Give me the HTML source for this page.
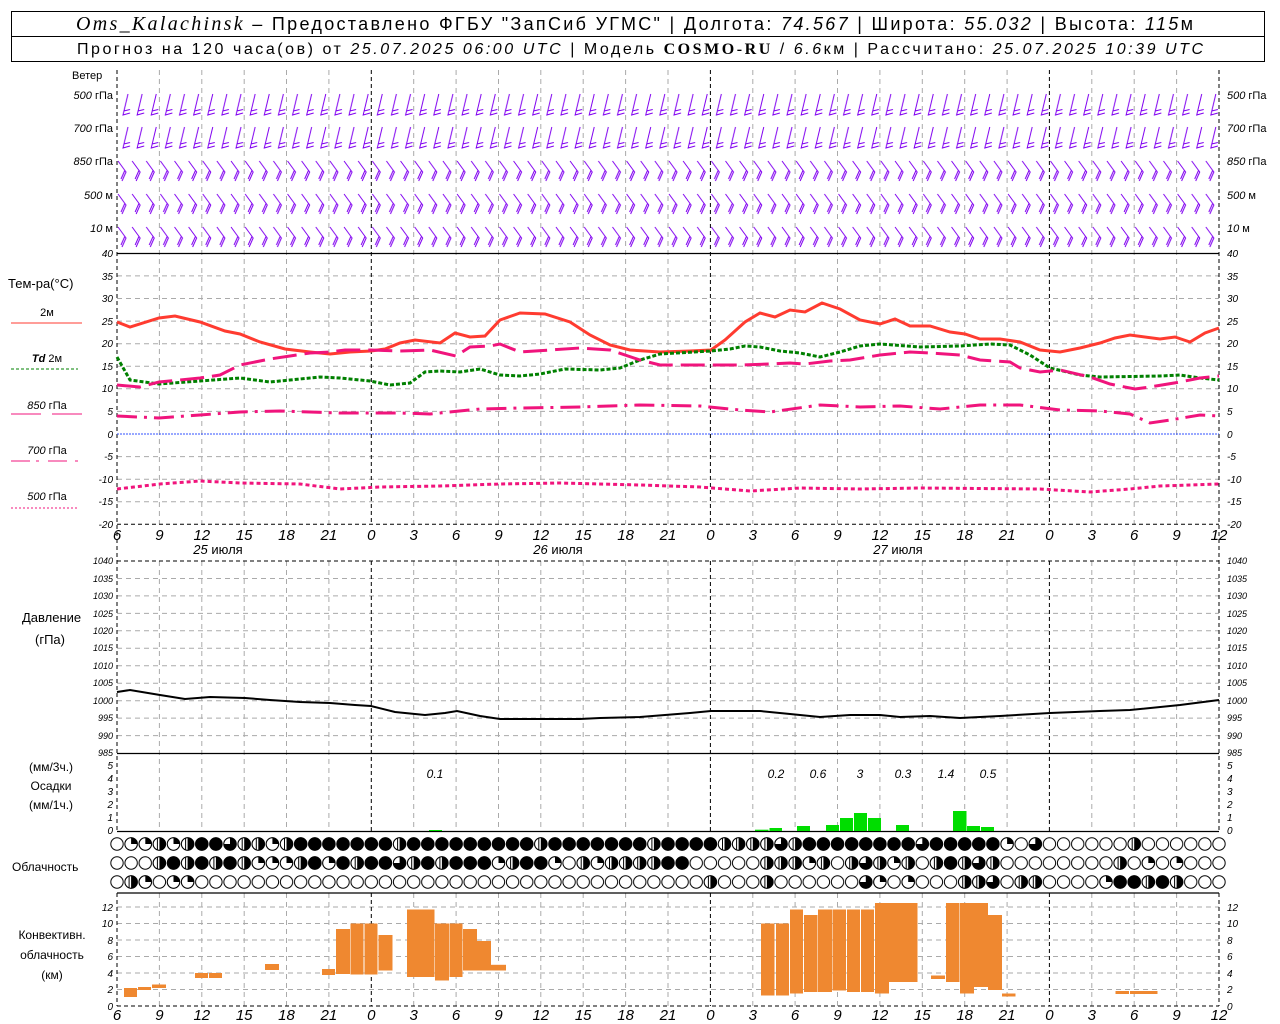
<!DOCTYPE html>
<html><head><meta charset="utf-8"><style>
html,body{margin:0;padding:0;background:#fff;width:1280px;height:1024px;overflow:hidden}
svg{display:block}
.t{font-family:"Liberation Sans",sans-serif;font-size:12px;fill:#000}
.ti{font-family:"Liberation Sans",sans-serif;font-size:10px;font-style:italic;fill:#000}
.tx{font-family:"Liberation Sans",sans-serif;font-size:15px;font-style:italic;fill:#000}
.g{stroke:#aaa;stroke-width:1;stroke-dasharray:5 4;fill:none}
.k{stroke:#000;stroke-width:1;stroke-dasharray:4 3;fill:none}
</style></head><body>
<svg width="1280" height="1024" viewBox="0 0 1280 1024" xmlns="http://www.w3.org/2000/svg">
<defs>
<pattern id="pe" x="109.94" y="834.5" width="14.128" height="19" patternUnits="userSpaceOnUse"><circle cx="7.064" cy="9.5" r="6.2" fill="#fff" stroke="#000" stroke-width="1"/></pattern>
<g id="f"><circle r="6.2" fill="#000" stroke="#000"/></g>
<g id="h"><circle r="6.2" fill="#fff" stroke="#000"/><path d="M0,-6.2A6.2,6.2 0 0 1 0,6.2Z" fill="#000"/><path d="M-2,-6V6" stroke="#000"/></g>
<g id="q"><circle r="6.2" fill="#fff" stroke="#000"/><path d="M0,0V-6.2A6.2,6.2 0 0 1 6.2,0Z" fill="#000"/></g>
<g id="t"><circle r="6.2" fill="#fff" stroke="#000"/><path d="M0,0V-6.2A6.2,6.2 0 1 1 -6.2,0Z" fill="#000"/></g>
<pattern id="wa" x="117" y="93" width="14.128" height="33" patternUnits="userSpaceOnUse"><path d="M11,1 L6,22 L13,20 M6.8,18 L13,16.5" stroke="#8000f0" stroke-width="1" fill="none"/></pattern>
<pattern id="wb" x="117" y="160" width="14.128" height="33" patternUnits="userSpaceOnUse"><path d="M1,1 L9,12 L5,21 M8,10 L4,19" stroke="#8000f0" stroke-width="1" fill="none"/></pattern>
</defs>

<!-- header -->
<rect x="11.5" y="11.5" width="1253" height="50" fill="none" stroke="#000"/>
<line x1="11" y1="36.5" x2="1265" y2="36.5" stroke="#000"/>
<text x="76" y="30" textLength="1117" lengthAdjust="spacing" style="font-family:'Liberation Sans',sans-serif;font-size:18px"><tspan style="font-family:'Liberation Serif',serif;font-style:italic;font-size:20px">Oms_Kalachinsk</tspan> – Предоставлено ФГБУ "ЗапСиб УГМС" | Долгота: <tspan font-style="italic">74.567</tspan> | Широта: <tspan font-style="italic">55.032</tspan> | Высота: <tspan font-style="italic">115</tspan>м</text>
<text x="77" y="54" textLength="1126" lengthAdjust="spacing" style="font-family:'Liberation Sans',sans-serif;font-size:16px">Прогноз на 120 часа(ов) от <tspan font-style="italic">25.07.2025 06:00 UTC</tspan> | Модель <tspan style="font-family:'Liberation Serif',serif;font-weight:bold">COSMO-RU</tspan> / <tspan font-style="italic">6.6</tspan>км | Рассчитано: <tspan font-style="italic">25.07.2025 10:39 UTC</tspan></text>

<!-- vertical grid -->
<path class="g" d="M159.4 70V524M159.4 561V831M159.4 893V1006M201.8 70V524M201.8 561V831M201.8 893V1006M244.2 70V524M244.2 561V831M244.2 893V1006M286.5 70V524M286.5 561V831M286.5 893V1006M328.9 70V524M328.9 561V831M328.9 893V1006M413.7 70V524M413.7 561V831M413.7 893V1006M456.1 70V524M456.1 561V831M456.1 893V1006M498.5 70V524M498.5 561V831M498.5 893V1006M540.8 70V524M540.8 561V831M540.8 893V1006M583.2 70V524M583.2 561V831M583.2 893V1006M625.6 70V524M625.6 561V831M625.6 893V1006M668 70V524M668 561V831M668 893V1006M752.8 70V524M752.8 561V831M752.8 893V1006M795.1 70V524M795.1 561V831M795.1 893V1006M837.5 70V524M837.5 561V831M837.5 893V1006M879.9 70V524M879.9 561V831M879.9 893V1006M922.3 70V524M922.3 561V831M922.3 893V1006M964.7 70V524M964.7 561V831M964.7 893V1006M1007.1 70V524M1007.1 561V831M1007.1 893V1006M1091.8 70V524M1091.8 561V831M1091.8 893V1006M1134.2 70V524M1134.2 561V831M1134.2 893V1006M1176.6 70V524M1176.6 561V831M1176.6 893V1006"/>
<!-- horizontal grid -->
<path class="g" d="M117 275.9H1219M117 298.5H1219M117 321.1H1219M117 343.7H1219M117 366.2H1219M117 388.8H1219M117 411.4H1219M117 456.6H1219M117 479.2H1219M117 501.8H1219M117 578.5H1219M117 595.9H1219M117 613.4H1219M117 630.8H1219M117 648.3H1219M117 665.8H1219M117 683.2H1219M117 700.7H1219M117 718.1H1219M117 735.6H1219M117 989.5H1219M117 973H1219M117 956.5H1219M117 940H1219M117 923.5H1219M117 907H1219"/>
<!-- black dashed -->
<path class="k" d="M117 70V831M117 893V1006M1219 70V831M1219 893V1006M371.3 70V524M371.3 561V831M371.3 893V1006M710.4 70V524M710.4 561V831M710.4 893V1006M1049.4 70V524M1049.4 561V831M1049.4 893V1006M117 524.3H1219M117 561H1219M117 1006H1219"/>
<path d="M117 253.5H1219M117 753.5H1219M117 831.5H1219M117 893H1219" stroke="#000" stroke-width="1.3"/>
<line x1="117" y1="434" x2="1219" y2="434" stroke="#3050ff" stroke-width="1" stroke-dasharray="2 1"/>

<!-- wind barbs -->
<rect x="117" y="93" width="1102" height="66" fill="url(#wa)"/>
<rect x="117" y="160" width="1102" height="92" fill="url(#wb)"/>
<g class="t" style="font-size:11px">
<text x="72" y="79">Ветер</text>
<text x="113" y="99" text-anchor="end"><tspan font-style="italic">500</tspan> гПа</text>
<text x="113" y="132" text-anchor="end"><tspan font-style="italic">700</tspan> гПа</text>
<text x="113" y="165" text-anchor="end"><tspan font-style="italic">850</tspan> гПа</text>
<text x="113" y="199" text-anchor="end"><tspan font-style="italic">500</tspan> м</text>
<text x="113" y="232" text-anchor="end"><tspan font-style="italic">10</tspan>   м</text>
<text x="1227" y="99"><tspan font-style="italic">500</tspan> гПа</text>
<text x="1227" y="132"><tspan font-style="italic">700</tspan> гПа</text>
<text x="1227" y="165"><tspan font-style="italic">850</tspan> гПа</text>
<text x="1227" y="199"><tspan font-style="italic">500</tspan> м</text>
<text x="1227" y="232"><tspan font-style="italic">10</tspan>   м</text>
</g>

<!-- temperature curves -->
<polyline fill="none" stroke="#ff3b30" stroke-width="3" points="117,322 130,327 159,318 175,316 200,322 225,331 240,334 260,342 285,349 310,352 330,354 350,352 371,351 385,349 400,343 415,340 440,343 455,333 470,337 485,336 500,320 520,313 545,314 570,322 590,335 610,345 630,350 660,352 690,351 711,350 725,340 745,322 760,313 775,317 790,310 805,312 822,303 840,309 860,320 880,324 895,319 910,326 930,326 950,332 965,334 980,339 1000,339 1020,342 1040,350 1060,352 1080,348 1100,343 1115,338 1130,335 1160,339 1175,337 1190,342 1205,333 1219,328"/>
<polyline fill="none" stroke="#008000" stroke-width="3" stroke-dasharray="4 2" points="117,357 130,380 159,384 200,381 240,378 270,382 320,377 340,378 370,381 390,385 410,383 425,372 440,371 460,372 480,369 500,375 520,376 540,374 565,369 600,370 620,368 640,360 660,354 711,351 730,349 745,346 760,347 780,351 800,353 820,357 840,352 860,346 880,344 920,347 960,346 990,344 1010,345 1030,355 1050,368 1080,375 1100,377 1160,376 1180,375 1200,378 1219,380"/>
<polyline fill="none" stroke="#f0147c" stroke-width="3" stroke-dasharray="24 8" points="117,385 140,387 159,382 200,378 220,375 240,365 270,359 290,356 310,353 330,352 345,350 370,350 400,351 430,350 456,356 470,347 490,346 500,344 520,352 550,350 580,348 610,350 640,360 660,365 711,365 740,365 770,364 790,363 805,364 830,361 850,360 880,355 910,352 930,353 960,355 980,360 1010,362 1020,368 1040,372 1060,370 1090,377 1110,384 1135,389 1150,387 1180,382 1200,378 1219,376"/>
<polyline fill="none" stroke="#f0147c" stroke-width="3" stroke-dasharray="20 7 3 7" points="117,416 159,418 200,415 240,412 280,411 340,413 400,413 430,414 480,409 520,408 580,407 640,405 700,406 740,410 770,412 820,405 860,407 900,406 940,409 980,405 1020,405 1060,410 1100,411 1130,414 1150,423 1170,420 1200,415 1219,416"/>
<polyline fill="none" stroke="#f0147c" stroke-width="3" stroke-dasharray="4 3" points="117,489 160,484 200,481 240,483 300,484 340,489 380,487 440,486 500,484 560,483 640,485 700,487 750,491 800,488 860,489 920,488 1040,489 1090,492 1130,489 1160,486 1219,484"/>

<!-- temp legend -->
<g class="t">
<text x="8" y="288" style="font-size:13px">Тем-ра(°C)</text>
<text x="47" y="316" text-anchor="middle" style="font-size:11px">2м</text>
<text x="47" y="362" text-anchor="middle" style="font-size:11px"><tspan font-style="italic" font-weight="bold">Td</tspan>  2м</text>
<text x="47" y="409" text-anchor="middle" style="font-size:11px"><tspan font-style="italic">850</tspan> гПа</text>
<text x="47" y="454" text-anchor="middle" style="font-size:11px"><tspan font-style="italic">700</tspan> гПа</text>
<text x="47" y="500" text-anchor="middle" style="font-size:11px"><tspan font-style="italic">500</tspan> гПа</text>
</g>
<line x1="11" y1="323" x2="82" y2="323" stroke="#ff3b30"/>
<line x1="11" y1="369" x2="78" y2="369" stroke="#008000" stroke-dasharray="3 2"/>
<path d="M11 414H41M52 414H82" stroke="#f0147c"/>
<path d="M11 461H30M36 461H39M48 461H67M75 461H78" stroke="#f0147c"/>
<line x1="11" y1="508" x2="78" y2="508" stroke="#f0147c" stroke-dasharray="2 2"/>

<!-- temp ticks -->
<g class="ti" text-anchor="end">
<text x="113" y="257">40</text><text x="113" y="280">35</text><text x="113" y="302">30</text><text x="113" y="325">25</text><text x="113" y="347">20</text><text x="113" y="370">15</text><text x="113" y="392">10</text><text x="113" y="415">5</text><text x="113" y="438">0</text><text x="113" y="460">-5</text><text x="113" y="483">-10</text><text x="113" y="505">-15</text><text x="113" y="528">-20</text>
</g>
<g class="ti">
<text x="1227" y="257">40</text><text x="1227" y="280">35</text><text x="1227" y="302">30</text><text x="1227" y="325">25</text><text x="1227" y="347">20</text><text x="1227" y="370">15</text><text x="1227" y="392">10</text><text x="1227" y="415">5</text><text x="1227" y="438">0</text><text x="1227" y="460">-5</text><text x="1227" y="483">-10</text><text x="1227" y="505">-15</text><text x="1227" y="528">-20</text>
</g>
<g class="tx" text-anchor="middle">
<text x="117" y="540">6</text><text x="159.4" y="540">9</text><text x="201.8" y="540">12</text><text x="244.2" y="540">15</text><text x="286.5" y="540">18</text><text x="328.9" y="540">21</text><text x="371.3" y="540">0</text><text x="413.7" y="540">3</text><text x="456.1" y="540">6</text><text x="498.5" y="540">9</text><text x="540.8" y="540">12</text><text x="583.2" y="540">15</text><text x="625.6" y="540">18</text><text x="668" y="540">21</text><text x="710.4" y="540">0</text><text x="752.8" y="540">3</text><text x="795.1" y="540">6</text><text x="837.5" y="540">9</text><text x="879.9" y="540">12</text><text x="922.3" y="540">15</text><text x="964.7" y="540">18</text><text x="1007.1" y="540">21</text><text x="1049.4" y="540">0</text><text x="1091.8" y="540">3</text><text x="1134.2" y="540">6</text><text x="1176.6" y="540">9</text><text x="1219" y="540">12</text>
</g>
<g class="t" text-anchor="middle" style="font-size:13px">
<text x="218" y="554"><tspan font-style="italic">25</tspan> июля</text>
<text x="558" y="554"><tspan font-style="italic">26</tspan> июля</text>
<text x="898" y="554"><tspan font-style="italic">27</tspan> июля</text>
</g>

<!-- pressure -->
<polyline fill="none" stroke="#000" stroke-width="2" points="117,692 130,690 160,695 185,699 210,697 245,698 270,700 300,702 330,703 355,705 371,706 395,712 425,715 445,713 457,711 480,716 500,719 580,719 600,718 640,717 690,713 711,711 760,711 790,714 820,717 850,715 880,715 900,717 930,716 960,718 1000,716 1050,713 1100,711 1130,710 1180,705 1219,700"/>
<g class="t" style="font-size:13px"><text x="22" y="622">Давление</text><text x="50" y="644" text-anchor="middle">(гПа)</text></g>
<g class="ti" text-anchor="end" style="font-size:9px">
<text x="113" y="564">1040</text><text x="113" y="582">1035</text><text x="113" y="599">1030</text><text x="113" y="617">1025</text><text x="113" y="634">1020</text><text x="113" y="651">1015</text><text x="113" y="669">1010</text><text x="113" y="686">1005</text><text x="113" y="704">1000</text><text x="113" y="721">995</text><text x="113" y="739">990</text><text x="113" y="756">985</text>
</g>
<g class="ti" style="font-size:9px">
<text x="1227" y="564">1040</text><text x="1227" y="582">1035</text><text x="1227" y="599">1030</text><text x="1227" y="617">1025</text><text x="1227" y="634">1020</text><text x="1227" y="651">1015</text><text x="1227" y="669">1010</text><text x="1227" y="686">1005</text><text x="1227" y="704">1000</text><text x="1227" y="721">995</text><text x="1227" y="739">990</text><text x="1227" y="756">985</text>
</g>

<!-- precipitation -->
<g fill="#00dd00">
<rect x="429" y="830" width="13" height="1"/>
<rect x="755" y="829.7" width="13.5" height="1.3"/>
<rect x="769.5" y="828" width="12.5" height="3"/>
<rect x="797" y="826" width="13" height="5"/>
<rect x="826" y="825" width="13" height="6"/>
<rect x="840" y="818" width="13" height="13"/>
<rect x="854" y="813" width="13" height="18"/>
<rect x="868" y="818" width="13" height="13"/>
<rect x="896" y="825" width="13" height="6"/>
<rect x="953" y="811" width="13.5" height="20"/>
<rect x="967" y="826" width="13" height="5"/>
<rect x="981" y="827" width="13" height="4"/>
</g>
<g class="ti" style="font-size:12px" text-anchor="middle">
<text x="435" y="778">0.1</text><text x="776" y="778">0.2</text><text x="818" y="778">0.6</text><text x="860" y="778">3</text><text x="903" y="778">0.3</text><text x="946" y="778">1.4</text><text x="988" y="778">0.5</text>
</g>
<g class="t" text-anchor="middle"><text x="51" y="771">(мм/3ч.)</text><text x="51" y="790">Осадки</text><text x="51" y="809">(мм/1ч.)</text></g>
<g class="ti" text-anchor="end"><text x="113" y="769">5</text><text x="113" y="782">4</text><text x="113" y="795">3</text><text x="113" y="808">2</text><text x="113" y="821">1</text><text x="113" y="834">0</text></g>
<g class="ti"><text x="1227" y="769">5</text><text x="1227" y="782">4</text><text x="1227" y="795">3</text><text x="1227" y="808">2</text><text x="1227" y="821">1</text><text x="1227" y="834">0</text></g>

<!-- clouds -->
<rect x="109.94" y="834.5" width="1116.1" height="57" fill="url(#pe)"/>
<g transform="translate(0,844)">
<use href="#q" x="131.1"/><use href="#q" x="145.3"/><use href="#h" x="159.4"/><use href="#q" x="173.5"/><use href="#h" x="187.6"/><use href="#f" x="201.8"/><use href="#f" x="215.9"/><use href="#t" x="230"/><use href="#h" x="244.2"/><use href="#h" x="258.3"/><use href="#q" x="272.4"/><use href="#h" x="286.5"/><use href="#f" x="300.7"/><use href="#f" x="314.8"/><use href="#f" x="328.9"/><use href="#f" x="343"/><use href="#f" x="357.2"/><use href="#f" x="371.3"/><use href="#f" x="385.4"/><use href="#h" x="399.6"/><use href="#f" x="413.7"/><use href="#f" x="427.8"/><use href="#f" x="441.9"/><use href="#f" x="456.1"/><use href="#f" x="470.2"/><use href="#f" x="484.3"/><use href="#f" x="498.5"/><use href="#f" x="512.6"/><use href="#f" x="526.7"/><use href="#h" x="540.8"/><use href="#f" x="555"/><use href="#f" x="569.1"/><use href="#f" x="583.2"/><use href="#f" x="597.4"/><use href="#f" x="611.5"/><use href="#f" x="625.6"/><use href="#f" x="639.7"/><use href="#h" x="653.9"/><use href="#f" x="668"/><use href="#f" x="682.1"/><use href="#f" x="696.2"/><use href="#f" x="710.4"/><use href="#h" x="724.5"/><use href="#h" x="738.6"/><use href="#h" x="752.8"/><use href="#h" x="766.9"/><use href="#t" x="781"/><use href="#h" x="795.1"/><use href="#f" x="809.3"/><use href="#f" x="823.4"/><use href="#f" x="837.5"/><use href="#f" x="851.7"/><use href="#f" x="865.8"/><use href="#f" x="879.9"/><use href="#f" x="894"/><use href="#f" x="908.2"/><use href="#t" x="922.3"/><use href="#f" x="936.4"/><use href="#f" x="950.6"/><use href="#f" x="964.7"/><use href="#f" x="978.8"/><use href="#f" x="992.9"/><use href="#q" x="1007.1"/><use href="#t" x="1035.3"/><use href="#h" x="1134.2"/>
</g>
<g transform="translate(0,863)">
<use href="#h" x="159.4"/><use href="#f" x="173.5"/><use href="#h" x="187.6"/><use href="#f" x="201.8"/><use href="#h" x="215.9"/><use href="#f" x="230"/><use href="#h" x="244.2"/><use href="#q" x="258.3"/><use href="#q" x="272.4"/><use href="#q" x="286.5"/><use href="#h" x="300.7"/><use href="#f" x="314.8"/><use href="#q" x="328.9"/><use href="#f" x="343"/><use href="#h" x="357.2"/><use href="#f" x="371.3"/><use href="#f" x="385.4"/><use href="#t" x="399.6"/><use href="#h" x="413.7"/><use href="#f" x="427.8"/><use href="#h" x="441.9"/><use href="#f" x="456.1"/><use href="#f" x="470.2"/><use href="#f" x="484.3"/><use href="#q" x="498.5"/><use href="#h" x="512.6"/><use href="#f" x="526.7"/><use href="#f" x="540.8"/><use href="#q" x="555"/><use href="#h" x="583.2"/><use href="#q" x="597.4"/><use href="#h" x="611.5"/><use href="#h" x="625.6"/><use href="#h" x="639.7"/><use href="#h" x="653.9"/><use href="#f" x="668"/><use href="#f" x="682.1"/><use href="#h" x="766.9"/><use href="#h" x="781"/><use href="#h" x="795.1"/><use href="#q" x="809.3"/><use href="#h" x="823.4"/><use href="#h" x="851.7"/><use href="#t" x="865.8"/><use href="#h" x="879.9"/><use href="#q" x="894"/><use href="#h" x="908.2"/><use href="#h" x="936.4"/><use href="#f" x="950.6"/><use href="#h" x="964.7"/><use href="#t" x="978.8"/><use href="#h" x="992.9"/><use href="#h" x="1120.1"/><use href="#q" x="1148.3"/><use href="#q" x="1176.6"/>
</g>
<g transform="translate(0,882)">
<use href="#h" x="131.1"/><use href="#q" x="145.3"/><use href="#q" x="173.5"/><use href="#q" x="187.6"/><use href="#h" x="710.4"/><use href="#h" x="766.9"/><use href="#t" x="865.8"/><use href="#q" x="879.9"/><use href="#q" x="908.2"/><use href="#h" x="964.7"/><use href="#h" x="978.8"/><use href="#t" x="992.9"/><use href="#h" x="1021.2"/><use href="#h" x="1035.3"/><use href="#q" x="1106"/><use href="#f" x="1120.1"/><use href="#f" x="1134.2"/><use href="#h" x="1148.3"/><use href="#f" x="1162.5"/><use href="#h" x="1176.6"/>
</g>
<text class="t" x="12" y="871">Облачность</text>

<!-- convective -->
<g fill="#ef8830">
<rect x="124" y="988" width="13" height="9"/><rect x="138" y="987" width="13" height="3"/><rect x="152" y="984.5" width="14" height="3.5"/>
<rect x="195" y="973" width="13" height="5"/><rect x="209" y="973" width="13" height="5"/>
<rect x="265" y="964" width="14" height="6"/>
<rect x="322" y="969" width="13" height="6"/><rect x="336" y="929" width="14" height="45"/><rect x="350.5" y="923.5" width="13" height="51"/><rect x="364.5" y="923.5" width="13" height="51"/><rect x="378.5" y="935" width="14" height="35.5"/>
<rect x="407" y="909.5" width="27.5" height="67.5"/><rect x="435" y="923.5" width="14" height="57"/><rect x="449.5" y="923.5" width="13" height="53.5"/><rect x="463" y="929" width="14" height="41.5"/><rect x="477" y="941" width="14" height="29.5"/><rect x="491" y="964.8" width="15" height="5.7"/>
<rect x="761" y="923.5" width="13.5" height="72"/><rect x="776" y="923.5" width="13" height="72"/><rect x="790" y="909.5" width="13" height="84"/><rect x="804" y="915" width="13.5" height="77"/><rect x="818" y="909.5" width="14" height="82.5"/><rect x="832.5" y="909.5" width="13.5" height="81"/><rect x="847" y="909.5" width="13" height="82.5"/><rect x="861" y="909.5" width="13" height="82.5"/><rect x="875" y="903" width="14" height="90.5"/><rect x="889" y="903" width="28.5" height="79"/>
<rect x="931" y="975.5" width="14" height="3.5"/><rect x="946" y="903" width="13.5" height="79"/><rect x="960" y="903" width="14" height="90.5"/><rect x="974" y="903" width="14" height="84"/><rect x="988" y="915" width="14" height="75"/><rect x="1002" y="993.5" width="13.5" height="3"/>
<rect x="1115.5" y="991" width="13.5" height="3"/><rect x="1130" y="991" width="27.5" height="3"/>
</g>
<g class="t" text-anchor="middle"><text x="52" y="939">Конвективн.</text><text x="52" y="959">облачность</text><text x="52" y="979">(км)</text></g>
<g class="ti" text-anchor="end"><text x="113" y="911">12</text><text x="113" y="927">10</text><text x="113" y="944">8</text><text x="113" y="960">6</text><text x="113" y="977">4</text><text x="113" y="993">2</text><text x="113" y="1010">0</text></g>
<g class="ti"><text x="1227" y="911">12</text><text x="1227" y="927">10</text><text x="1227" y="944">8</text><text x="1227" y="960">6</text><text x="1227" y="977">4</text><text x="1227" y="993">2</text><text x="1227" y="1010">0</text></g>
<g class="tx" text-anchor="middle">
<text x="117" y="1020">6</text><text x="159.4" y="1020">9</text><text x="201.8" y="1020">12</text><text x="244.2" y="1020">15</text><text x="286.5" y="1020">18</text><text x="328.9" y="1020">21</text><text x="371.3" y="1020">0</text><text x="413.7" y="1020">3</text><text x="456.1" y="1020">6</text><text x="498.5" y="1020">9</text><text x="540.8" y="1020">12</text><text x="583.2" y="1020">15</text><text x="625.6" y="1020">18</text><text x="668" y="1020">21</text><text x="710.4" y="1020">0</text><text x="752.8" y="1020">3</text><text x="795.1" y="1020">6</text><text x="837.5" y="1020">9</text><text x="879.9" y="1020">12</text><text x="922.3" y="1020">15</text><text x="964.7" y="1020">18</text><text x="1007.1" y="1020">21</text><text x="1049.4" y="1020">0</text><text x="1091.8" y="1020">3</text><text x="1134.2" y="1020">6</text><text x="1176.6" y="1020">9</text><text x="1219" y="1020">12</text>
</g>
</svg>
</body></html>
